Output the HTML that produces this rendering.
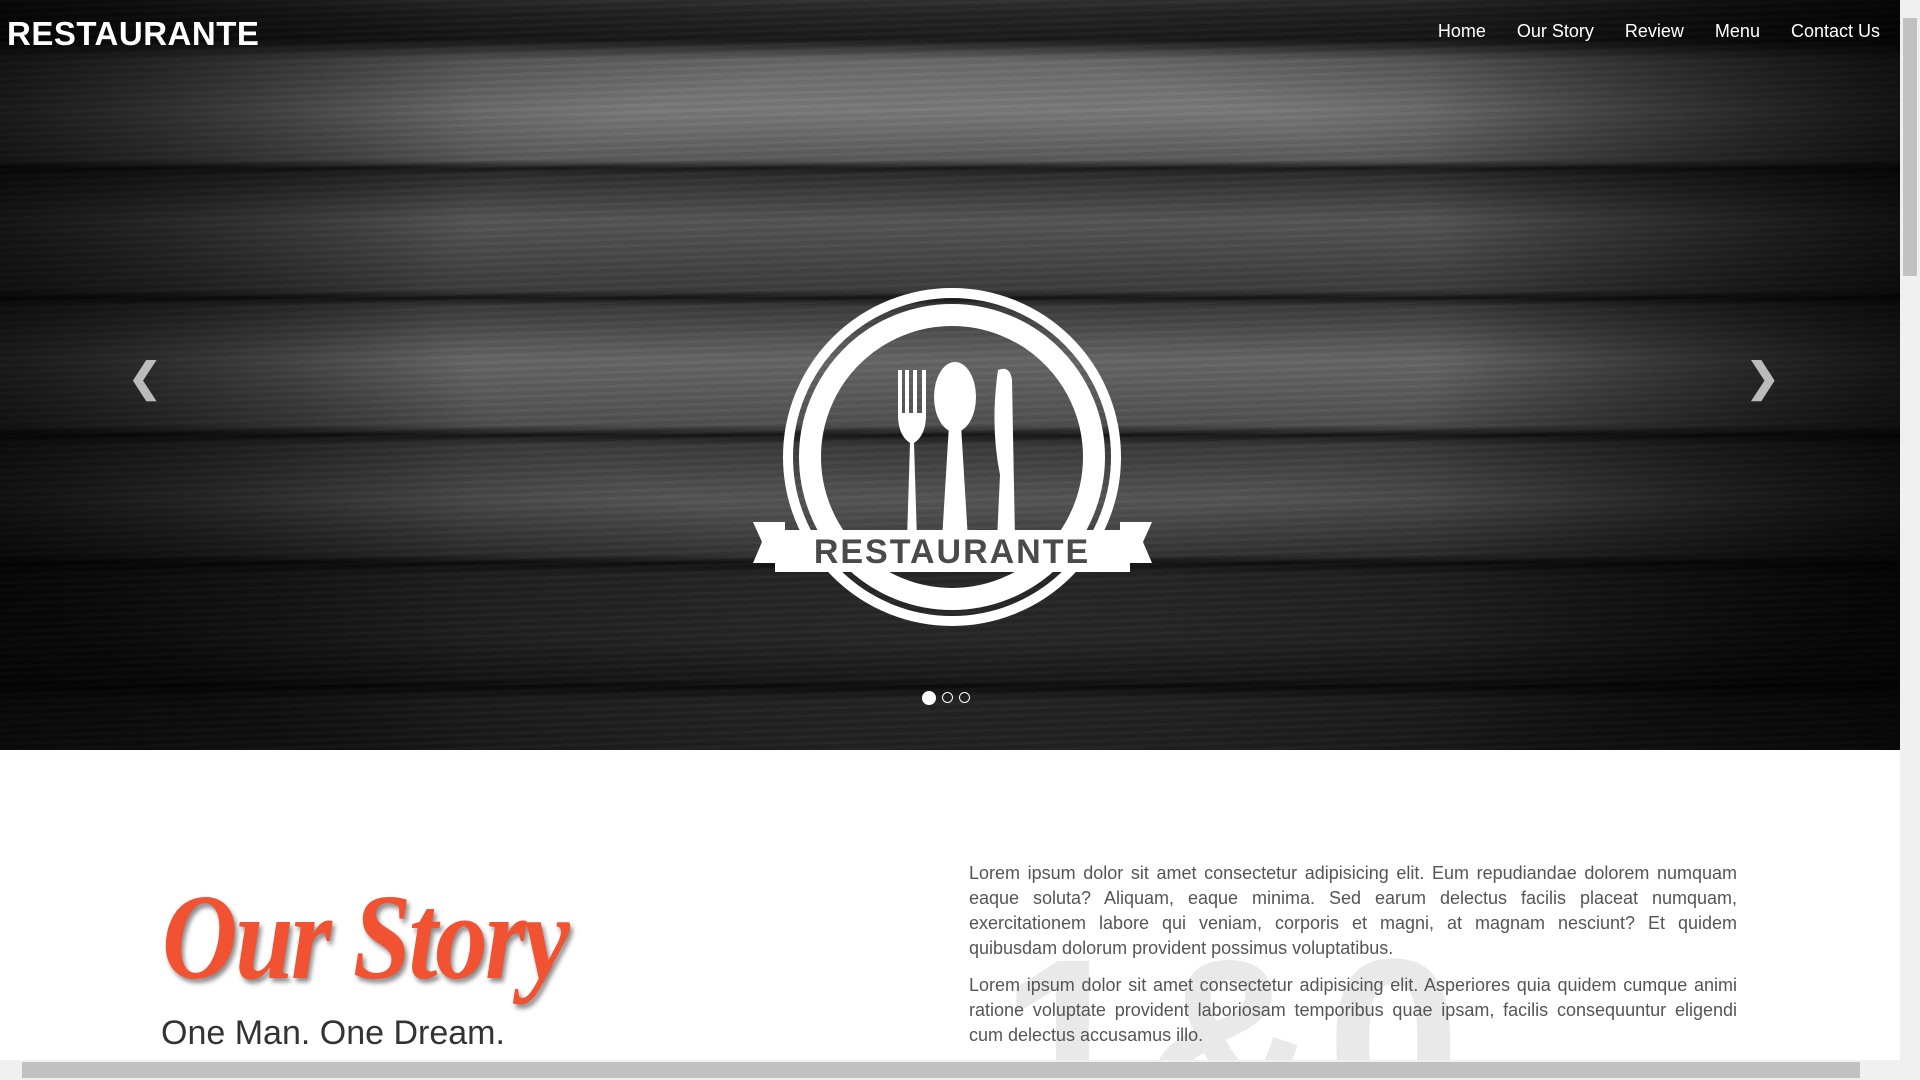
<!DOCTYPE html>
<html><head><meta charset="utf-8">
<style>
html,body{margin:0;padding:0;width:1920px;height:1080px;overflow:hidden;background:#fff;font-family:"Liberation Sans",sans-serif;}
#wrap{position:relative;width:1920px;height:1080px;overflow:hidden;}
.hero{position:absolute;left:0;top:0;width:1900px;height:750px;overflow:hidden;
background:
radial-gradient(ellipse 60% 70% at 50% 40%, rgba(0,0,0,0) 0%, rgba(0,0,0,0) 45%, rgba(0,0,0,0.7) 100%),
linear-gradient(180deg,#3a3a3a 0,#2a2a2a 12px,#1c1c1c 40px,#6a6a6a 60px,#7a7a7a 110px,#5a5a5a 160px,#1a1a1a 168px,#2e2e2e 175px,#555 220px,#3c3c3c 290px,#151515 298px,#3a3a3a 306px,#666 360px,#505050 425px,#161616 435px,#3a3a3a 445px,#555 500px,#383838 555px,#121212 563px,#2a2a2a 575px,#333 640px,#262626 680px,#111 686px,#3a3a3a 700px,#444 750px);}
.hero .lines{position:absolute;inset:0;background:repeating-linear-gradient(178deg,rgba(255,255,255,.025) 0 3px,rgba(0,0,0,.04) 3px 7px);}
.vig{position:absolute;inset:0;background:linear-gradient(90deg,rgba(0,0,0,.5) 0,rgba(0,0,0,0) 25%,rgba(0,0,0,0) 75%,rgba(0,0,0,.6) 100%);}
.logo{position:absolute;left:7px;top:15px;color:#fff;font-weight:bold;font-size:33px;letter-spacing:0.5px;}
.nav{position:absolute;top:21px;right:20px;color:#fff;font-size:18px;}
.nav span{margin-left:31px;}
.arrow{position:absolute;top:355px;color:#bbb;font-size:40px;font-weight:bold;}
.dots{position:absolute;top:690px;left:922px;}
.dots i{display:inline-block;width:11px;height:11px;border:1.5px solid #fff;border-radius:50%;margin-right:6px;box-sizing:border-box;}
.dots i.a{background:#fff;width:14px;height:14px;vertical-align:-2px}
.story{position:absolute;left:162px;top:868px;color:#f05232;font-family:"Liberation Serif",serif;font-style:italic;font-weight:bold;font-size:122px;letter-spacing:-3px;transform:scaleX(.86);transform-origin:left;text-shadow:3px 4px 5px rgba(0,0,0,.45);}
.sub{position:absolute;left:161px;top:1014px;font-size:34px;color:#333;}
.bgnum{position:absolute;left:1000px;top:905px;font-size:240px;font-weight:bold;color:#e9e9e9;letter-spacing:10px;}
.txt{position:absolute;left:969px;top:861px;width:768px;font-size:18px;line-height:25px;color:#555;text-align:justify;}
.txt p{margin:0 0 12px 0}
.vs{position:absolute;right:0;top:0;width:20px;height:1060px;background:#f0f0f0}
.vs div{position:absolute;left:3px;top:18px;width:14px;height:258px;background:#c1c1c1}
.hs{position:absolute;left:0;top:1060px;width:1920px;height:20px;background:#f0f0f0}
.hs div{position:absolute;left:22px;top:2px;width:1838px;height:16px;background:#c1c1c1}
</style></head><body><div id="wrap">
<div class="hero"><div class="lines"></div><div class="vig"></div>
<div class="logo">RESTAURANTE</div>
<div class="nav"><span>Home</span><span>Our Story</span><span>Review</span><span>Menu</span><span>Contact Us</span></div>
<div class="arrow" style="left:128px">&#10094;</div>
<div class="arrow" style="left:1746px">&#10095;</div>
<svg style="position:absolute;left:750px;top:285px" width="405" height="345" viewBox="0 0 405 345">
<circle cx="202" cy="172" r="164" fill="none" stroke="#fff" stroke-width="10"/>
<circle cx="202" cy="172" r="142" fill="none" stroke="#fff" stroke-width="22"/>
<path d="M148 85 L148 130 Q148 150 160 158 L157 255 L167 255 L164 158 Q176 150 176 130 L176 85 L172 85 L172 128 L167 128 L167 85 L163 85 L163 128 L159 128 L159 85 L155 85 L155 128 L152 128 L152 85 Z" fill="#fff"/>
<ellipse cx="205" cy="112" rx="21" ry="35" fill="#fff"/>
<path d="M199 140 L192 255 L218 255 L211 140 Z" fill="#fff"/>
<path d="M248 85 Q260 80 262 95 L265 255 L247 255 L250 190 Q240 140 248 85 Z" fill="#fff"/>
<path d="M3 237 L35 237 L35 278 L3 278 L12 257 Z" fill="#fff"/>
<path d="M402 237 L370 237 L370 278 L402 278 L393 257 Z" fill="#fff"/>
<rect x="25" y="245" width="355" height="42" fill="#fff"/>
<text x="202" y="278" text-anchor="middle" font-family="Liberation Sans" font-weight="bold" font-size="34" fill="#4a4a4a" letter-spacing="2">RESTAURANTE</text>
</svg>
<div class="dots"><i class="a"></i><i></i><i></i></div>
</div>
<div class="bgnum">1&amp;0</div>
<div class="story">Our Story</div>
<div class="sub">One Man. One Dream.</div>
<div class="txt"><p>Lorem ipsum dolor sit amet consectetur adipisicing elit. Eum repudiandae dolorem numquam eaque soluta? Aliquam, eaque minima. Sed earum delectus facilis placeat numquam, exercitationem labore qui veniam, corporis et magni, at magnam nesciunt? Et quidem quibusdam dolorum provident possimus voluptatibus.</p><p>Lorem ipsum dolor sit amet consectetur adipisicing elit. Asperiores quia quidem cumque animi ratione voluptate provident laboriosam temporibus quae ipsam, facilis consequuntur eligendi cum delectus accusamus illo.</p></div>
<div class="vs"><div></div></div>
<div class="hs"><div></div></div>
</div></body></html>
